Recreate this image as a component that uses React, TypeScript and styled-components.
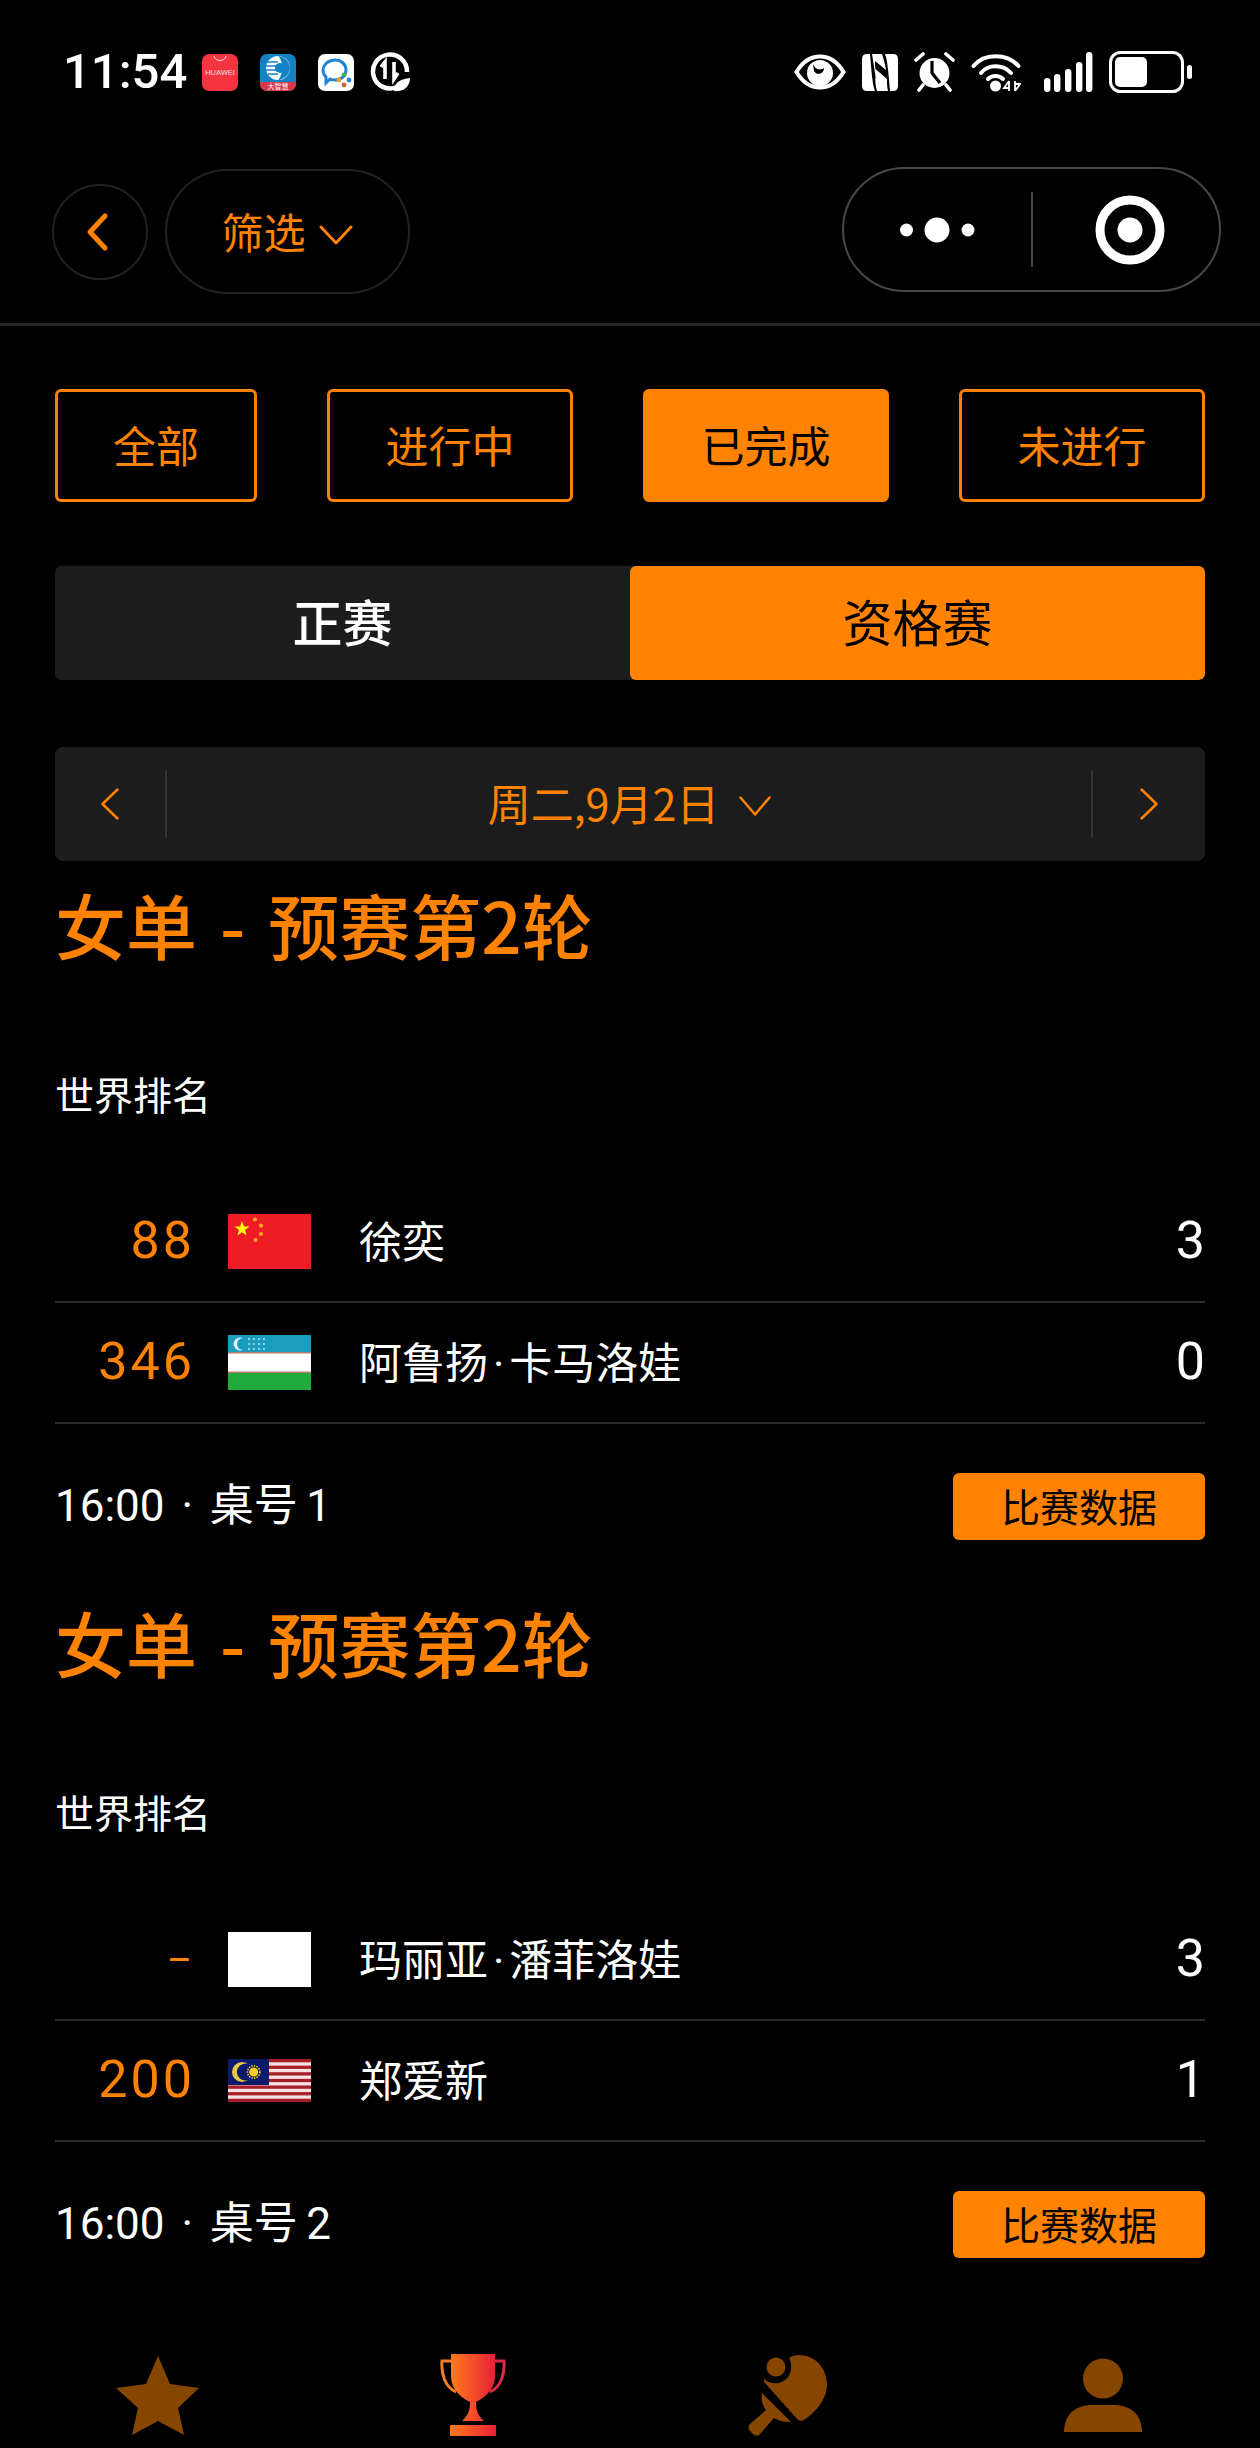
import React from "react";
import styled, { createGlobalStyle } from "styled-components";

const GlobalStyle = createGlobalStyle`
  html, body {
    margin: 0;
    padding: 0;
    background: #000;
  }
  body {
    font-family: "Noto Sans CJK SC", "Noto Sans", sans-serif;
    color: #fff;
  }
`;

const orange = "#ff8200";

const Page = styled.div`
  width: 1260px;
  height: 2448px;
  background: #000;
  overflow: hidden;
`;

/* status bar */
const StatusBar = styled.div`
  height: 52px;
  padding: 46px 68px 0 63px;
  display: flex;
  align-items: center;
  justify-content: space-between;
`;

const StatusLeft = styled.div`
  display: flex;
  align-items: center;
`;

const Clock = styled.div`
  font-family: "Roboto", sans-serif;
  font-size: 49px;
  font-weight: 500;
  width: 139px;
  line-height: 52px;
`;

const AppIcons = styled.div`
  display: flex;
  align-items: center;
  gap: 22px;
`;

const AppIcon = styled.div<{ $bg: string }>`
  width: 36px;
  height: 37px;
  border-radius: 7px;
  background: ${(p) => p.$bg};
  display: flex;
  flex-direction: column;
  align-items: center;
  justify-content: flex-start;
  overflow: hidden;
`;

const HuaweiText = styled.span`
  font-family: "Liberation Sans", sans-serif;
  font-size: 7.5px;
  line-height: 9px;
  margin-top: 3px;
  color: #ffdfe1;
`;

const BlueBand = styled.span`
  width: 100%;
  height: 9px;
  background: #d8384a;
  color: #fff;
  font-size: 7px;
  line-height: 9px;
  text-align: center;
`;

const LeafBadge = styled.div`
  margin-left: -6px;
  display: flex;
`;

const StatusRight = styled.div`
  display: flex;
  align-items: center;
  gap: 16px;
`;

const SignalWrap = styled.div`
  margin-left: 7px;
  display: flex;
`;

/* nav bar */
const NavBar = styled.div`
  height: 228px;
  box-sizing: border-box;
  border-bottom: 3px solid #262626;
  padding: 71px 39px 0 52px;
  display: flex;
  justify-content: space-between;
  align-items: flex-start;
`;

const NavLeft = styled.div`
  display: flex;
  align-items: center;
  gap: 17px;
`;

const BackCircle = styled.div`
  width: 96px;
  height: 96px;
  box-sizing: border-box;
  border: 2px solid #222;
  border-radius: 50%;
  padding-right: 6px;
  display: flex;
  align-items: center;
  justify-content: center;
`;

const FilterPill = styled.div`
  width: 245px;
  height: 125px;
  box-sizing: border-box;
  border: 2px solid #222;
  border-radius: 63px;
  padding-bottom: 3px;
  display: flex;
  align-items: center;
  justify-content: center;
  gap: 12px;
  color: ${orange};
  font-size: 42px;
`;

const DownMark = styled.span`
  display: flex;
  margin-top: 9px;
`;

const Capsule = styled.div`
  width: 379px;
  height: 125px;
  margin-top: -2px;
  box-sizing: border-box;
  border: 2px solid #484848;
  border-radius: 63px;
  display: flex;
  align-items: center;
`;

const CapsulePart = styled.div<{ $w: number; $shift?: number }>`
  width: ${(p) => p.$w}px;
  box-sizing: border-box;
  padding-left: ${(p) => p.$shift ?? 0}px;
  display: flex;
  align-items: center;
  justify-content: center;
`;

const CapsuleDivider = styled.div`
  width: 2px;
  height: 75px;
  background: #484848;
`;

/* content */
const Content = styled.div`
  padding: 0 55px;
`;

const StatusTabs = styled.div`
  margin-top: 63px;
  display: flex;
  justify-content: space-between;
`;

const StatusTab = styled.div<{ $active?: boolean; $w: number }>`
  width: ${(p) => p.$w}px;
  height: 113px;
  box-sizing: border-box;
  border: 3px solid ${orange};
  border-radius: 6px;
  padding-bottom: 4px;
  display: flex;
  align-items: center;
  justify-content: center;
  font-size: 43px;
  color: ${(p) => (p.$active ? "#000" : orange)};
  background: ${(p) => (p.$active ? orange : "transparent")};
`;

const Segment = styled.div`
  margin-top: 64px;
  height: 114px;
  display: flex;
  border-radius: 6px;
  overflow: hidden;
  background: #1c1c1c;
`;

const SegmentItem = styled.div<{ $active?: boolean }>`
  flex: 1;
  padding-bottom: 6px;
  display: flex;
  align-items: center;
  justify-content: center;
  font-size: 50px;
  font-weight: ${(p) => (p.$active ? 400 : 500)};
  color: ${(p) => (p.$active ? "#000" : "#fff")};
  background: ${(p) => (p.$active ? orange : "transparent")};
  border-radius: 6px;
`;

const DateBar = styled.div`
  margin-top: 67px;
  height: 114px;
  background: #1c1c1c;
  border-radius: 8px;
  display: flex;
  align-items: center;
`;

const DateSide = styled.div<{ $right?: boolean }>`
  width: ${(p) => (p.$right ? 114 : 112)}px;
  height: 68px;
  display: flex;
  align-items: center;
  justify-content: center;
  box-sizing: border-box;
  border-${(p) => (p.$right ? "left" : "right")}: 2px solid #333;
`;

const DateLabel = styled.div`
  flex: 1;
  padding-bottom: 5px;
  padding-left: 2px;
  display: flex;
  align-items: center;
  justify-content: center;
  gap: 19px;
  color: ${orange};
  font-size: 43px;
`;

const MatchBlock = styled.section`
  height: 718px;
`;

const Heading = styled.h2`
  margin: 0;
  padding-top: 12px;
  height: 100px;
  box-sizing: content-box;
  font-size: 71px;
  line-height: 100px;
  font-weight: 500;
  word-spacing: 7px;
  color: ${orange};
  white-space: pre;
`;

const RankLabel = styled.div`
  margin-top: 90px;
  height: 60px;
  line-height: 60px;
  font-size: 39px;
  color: #fff;
`;

const Players = styled.div`
  margin-top: 59px;
`;

const PlayerRow = styled.div`
  height: 121px;
  display: flex;
  align-items: center;
  border-bottom: 2px solid #2a2a2a;
  box-sizing: border-box;
`;

const Rank = styled.div<{ $dash?: boolean }>`
  width: 140px;
  padding-bottom: ${(p) => (p.$dash ? 0 : 3)}px;
  text-align: right;
  color: ${orange};
  font-family: "Roboto", sans-serif;
  font-size: ${(p) => (p.$dash ? 38 : 52)}px;
  letter-spacing: 3px;
`;

const FlagBox = styled.div`
  margin-left: 33px;
  width: 83px;
  height: 55px;
  flex-shrink: 0;
  display: flex;
  align-items: center;
`;

const PlayerName = styled.div`
  margin-left: 48px;
  padding-bottom: 6px;
  flex: 1;
  font-family: "Roboto", "Noto Sans CJK SC", sans-serif;
  font-size: 43px;
  color: #fff;
`;

const NameDot = styled.span`
  margin: 0 5px;
`;

const Score = styled.div`
  padding-bottom: 3px;
  font-family: "Roboto", sans-serif;
  font-size: 52px;
  color: #fff;
`;

const MatchFooter = styled.div`
  margin-top: 46px;
  display: flex;
  align-items: center;
  justify-content: space-between;
`;

const MatchInfo = styled.div`
  padding-bottom: 8px;
  font-family: "Roboto", "Noto Sans CJK SC", sans-serif;
  font-size: 44px;
  word-spacing: -2.5px;
  color: #fff;
  white-space: pre;
`;

const StatsButton = styled.div`
  width: 252px;
  height: 67px;
  border-radius: 6px;
  padding-bottom: 3px;
  box-sizing: border-box;
  background: ${orange};
  color: #000;
  font-size: 39px;
  display: flex;
  align-items: center;
  justify-content: center;
`;

const BottomNav = styled.div`
  margin-top: 56px;
  height: 84px;
  display: grid;
  grid-template-columns: repeat(4, 315px);
  justify-items: center;
  align-items: center;
`;

const Chevron = ({ dir, w, h, sw }: { dir: "l" | "r" | "d"; w: number; h: number; sw: number }) => {
  const d =
    dir === "l"
      ? `M${w - sw} ${sw} L${sw} ${h / 2} L${w - sw} ${h - sw}`
      : dir === "r"
      ? `M${sw} ${sw} L${w - sw} ${h / 2} L${sw} ${h - sw}`
      : `M${sw} ${sw} L${w / 2} ${h - sw} L${w - sw} ${sw}`;
  return (
    <svg width={w} height={h} viewBox={`0 0 ${w} ${h}`}>
      <path d={d} fill="none" stroke={orange} strokeWidth={sw} strokeLinecap="round" strokeLinejoin="round" />
    </svg>
  );
};

const ChinaFlag = () => (
  <svg width="83" height="55" viewBox="0 0 83 55">
    <rect width="83" height="55" fill="#ee1c25" />
    <polygon
      fill="#ffff00"
      points="14,7 15.9,12.5 21.6,12.5 17,16 18.7,21.5 14,18.2 9.3,21.5 11,16 6.4,12.5 12.1,12.5"
    />
    <circle cx="27" cy="5.5" r="2.1" fill="#f7a81a" />
    <circle cx="33" cy="11.7" r="2.1" fill="#f7a81a" />
    <circle cx="33" cy="20" r="2.1" fill="#f7a81a" />
    <circle cx="27.5" cy="26" r="2.1" fill="#f7a81a" />
  </svg>
);

const UzbekFlag = () => (
  <svg width="83" height="55" viewBox="0 0 83 55">
    <rect width="83" height="18" fill="#1c9cc0" />
    <rect y="18" width="83" height="19" fill="#fff" />
    <rect y="17" width="83" height="1.5" fill="#b5796f" />
    <rect y="36.5" width="83" height="1.5" fill="#b5796f" />
    <rect y="38" width="83" height="17" fill="#20ab3c" />
    <circle cx="12" cy="9" r="6.5" fill="#dff3f8" />
    <circle cx="15" cy="9" r="6" fill="#1c9cc0" />
    {[0, 1, 2].map((r) =>
      [0, 1, 2, 3].map((c) => (
        <circle key={`${r}-${c}`} cx={21 + c * 5} cy={4 + r * 5} r="0.9" fill="#cfe9f2" />
      ))
    )}
  </svg>
);

const MalaysiaFlag = () => (
  <svg width="83" height="43" viewBox="0 0 83 43">
    <rect width="83" height="43" fill="#f6e4e4" />
    {[0, 1, 2, 3, 4, 5, 6].map((i) => (
      <rect key={i} y={i * 6.62} width="83" height="3.3" fill="#a81e28" />
    ))}
    <rect width="41" height="26" fill="#0b1a6b" />
    <circle cx="14" cy="13" r="10" fill="#e9c94a" />
    <circle cx="17.5" cy="13" r="8.6" fill="#0b1a6b" />
    <circle cx="25.7" cy="13" r="4.5" fill="#f7cf26" />
    <circle cx="25.7" cy="13" r="6.2" fill="none" stroke="#f7cf26" strokeWidth="1.6" strokeDasharray="1.4 1.2" />
  </svg>
);

const BlankFlag = () => (
  <svg width="83" height="55" viewBox="0 0 83 55">
    <rect width="83" height="55" fill="#fff" />
  </svg>
);

const HuaweiBag = () => (
  <svg width="16" height="11" viewBox="0 0 16 11">
    <path d="M2 2 C3 8 13 8 14 2" fill="none" stroke="#ffdfe1" strokeWidth="1" />
  </svg>
);

const BlueGlobe = () => (
  <svg width="36" height="28" viewBox="0 0 36 28">
    <circle cx="18" cy="14" r="12" fill="#fff" />
    <path d="M18 2 C26 3 30 9 30 14 C30 20 25 25 18 26 C23 22 24 7 18 2 Z" fill="#1483c6" />
    <path d="M7 8 H18 M6 12 H18 M6 16 H18 M8 20 H18" stroke="#1483c6" strokeWidth="1.3" />
    <circle cx="20" cy="14" r="5" fill="#1483c6" />
  </svg>
);

const ChatMark = () => (
  <svg width="36" height="37" viewBox="0 0 36 37">
    <path
      d="M5 17 C5 10 11 6 17 6 C23 6 28 10 28 16 C28 22 23 26 17 26 C15 26 13 26 12 25 L8 29 L8 23 C6 21 5 19 5 17 Z"
      fill="none"
      stroke="#1f86d6"
      strokeWidth="3"
    />
    <circle cx="26" cy="21" r="2.4" fill="#3fae5a" />
    <circle cx="31" cy="26" r="2.4" fill="#1f86d6" />
    <circle cx="21" cy="26" r="2.4" fill="#f0a020" />
    <circle cx="26" cy="31" r="2.4" fill="#e0583a" />
  </svg>
);

const DataSaver = () => (
  <svg width="40" height="40" viewBox="0 0 40 40">
    <path d="M27 35 A17 17 0 1 1 37 20" fill="none" stroke="#fff" strokeWidth="4.5" />
    <path d="M11 15 L15 10 V27 M24 10 V27 L28 21" fill="none" stroke="#fff" strokeWidth="3.6" />
    <path d="M24 39 C24 30 31 27 40 26 C40 35 33 40 24 39 Z" fill="#fff" />
  </svg>
);

const Eye = () => (
  <svg width="52" height="36" viewBox="0 0 52 36">
    <path
      d="M2.5 18 C9 7 17 2.5 26 2.5 C35 2.5 43 7 49.5 18 C43 29 35 33.5 26 33.5 C17 33.5 9 29 2.5 18 Z"
      fill="none"
      stroke="#fff"
      strokeWidth="4"
    />
    <circle cx="26" cy="19" r="13" fill="#fff" />
    <path d="M19 10 C21 15 25 17 30 14 C30 20 23 22 20 17 Z" fill="#000" />
  </svg>
);

const Nfc = () => (
  <svg width="36" height="37" viewBox="0 0 36 37">
    <path d="M8 0 H5 Q0 0 0 5 V32 Q0 37 5 37 H13 C10 30 9 10 8 0 Z" fill="#fff" />
    <path d="M28 37 H31 Q36 37 36 32 V5 Q36 0 31 0 H23 C26 7 27 27 28 37 Z" fill="#fff" />
    <path d="M10 0 H20 C22 6 23 10 24 16 L13 7 C13 10 13 13 13.5 15 L25 25 C25 29 25 33 26 37 H15 C13.5 32 13 27 13.5 22 Z" fill="#fff" />
  </svg>
);

const Alarm = () => (
  <svg width="41" height="40" viewBox="0 0 41 40">
    <circle cx="20.5" cy="21" r="15" fill="#fff" />
    <path d="M18 9 V21 L26 31" fill="none" stroke="#000" strokeWidth="3.2" />
    <path
      d="M2 8 L9 2 M32 2 L39 8 M9 33 L5 38 M32 33 L36 38"
      stroke="#fff"
      strokeWidth="3.6"
      strokeLinecap="round"
    />
  </svg>
);

const Wifi = () => (
  <svg width="50" height="40" viewBox="0 0 50 40">
    <g fill="none" stroke="#fff" strokeWidth="4" strokeLinecap="round">
      <path d="M2.5 14 C13 1 36 1 47.5 14" />
      <path d="M10 21 C17 12 32 12 40 21" />
      <path d="M17 27 C21 23 28 23 32 27" />
    </g>
    <circle cx="24.5" cy="34" r="5.5" fill="#fff" />
    <path d="M38 29 V39 M38 29 L33 36 H38 M44 29 V39 M44 39 L49 32 H44" fill="none" stroke="#fff" strokeWidth="1.8" />
  </svg>
);

const Signal = () => (
  <svg width="49" height="40" viewBox="0 0 49 40">
    {[
      [0, 26],
      [10, 22],
      [21, 17],
      [32, 10],
      [42, 0],
    ].map(([x, y]) => (
      <rect key={x} x={x} y={y} width="6.4" height={40 - y} rx="3.2" fill="#fff" />
    ))}
  </svg>
);

const Battery = () => (
  <svg width="83" height="42" viewBox="0 0 83 42">
    <rect x="1.5" y="1.5" width="72" height="39" rx="10" fill="none" stroke="#fff" strokeWidth="3" />
    <rect x="6" y="6" width="32" height="30" rx="5" fill="#fff" />
    <rect x="78" y="14" width="5" height="14" rx="2.5" fill="#fff" />
  </svg>
);

const Dots = () => (
  <svg width="76" height="26" viewBox="0 0 76 26">
    <circle cx="6.5" cy="13" r="6.5" fill="#fff" />
    <circle cx="37" cy="13" r="12.5" fill="#fff" />
    <circle cx="68" cy="13" r="6.5" fill="#fff" />
  </svg>
);

const RecordTarget = () => (
  <svg width="70" height="70" viewBox="0 0 70 70">
    <circle cx="35" cy="35" r="30" fill="none" stroke="#fff" strokeWidth="9" />
    <circle cx="35" cy="35" r="12.5" fill="#fff" />
  </svg>
);

const navColor = "#864600";

const StarIcon = () => (
  <svg width="83" height="79" viewBox="0 0 83 79">
    <polygon fill={navColor} points="42,0 54,28 83,32 62,52 68,79 42,65 16,79 22,52 0,32 30,28" />
  </svg>
);

const TrophyIcon = () => (
  <svg width="66" height="82" viewBox="0 0 66 82">
    <defs>
      <linearGradient id="cup" x1="0" x2="1">
        <stop offset="0" stopColor="#ff7a1a" />
        <stop offset="1" stopColor="#e8203a" />
      </linearGradient>
    </defs>
    <path
      d="M11 0 H55 V22 C55 36 44 44 36 48 C36 56 38 62 44 67 H22 C28 62 30 56 30 48 C22 44 11 36 11 22 Z"
      fill="url(#cup)"
    />
    <path d="M11 7 H2 C1 20 5 33 16 38" fill="none" stroke="#f47c2a" strokeWidth="3" />
    <path d="M55 7 H64 C65 20 61 33 50 38" fill="none" stroke="#d92a4a" strokeWidth="3" />
    <rect x="10" y="71" width="46" height="11" rx="1" fill="url(#cup)" />
  </svg>
);

const PaddleIcon = () => (
  <svg width="80" height="81" viewBox="0 0 80 81">
    <circle cx="28" cy="12" r="9.5" fill={navColor} />
    <path
      d="M41 3 C44 1 48 0 51 0 C68 0 79 14 79 30 C79 44 67 58 56 65 C54 66 52 66 50 65 L16 27 L16 24 C24 31 34 29 40 22 C44 17 44 9 41 3 Z"
      fill={navColor}
    />
    <path
      d="M14 38 L43 67 C38 67 31 66 26 63 L12 79 C10 81 7 81 5 79 L2 76 C0 74 0 71 2 69 L18 55 C14 50 13 44 14 38 Z"
      fill={navColor}
    />
  </svg>
);

const PersonIcon = () => (
  <svg width="78" height="74" viewBox="0 0 78 74">
    <circle cx="39" cy="20.5" r="20" fill={navColor} />
    <path d="M0 74 C0 56 12 47 28 47 H50 C66 47 78 56 78 74 Z" fill={navColor} />
  </svg>
);

type Player = { rank: string; flag: React.ReactNode; name: string; score: number };
type Match = { table: string; players: Player[] };

const matches: Match[] = [
  {
    table: "16:00  ·  桌号 1",
    players: [
      { rank: "88", flag: <ChinaFlag />, name: "徐奕", score: 3 },
      { rank: "346", flag: <UzbekFlag />, name: "阿鲁扬·卡马洛娃", score: 0 },
    ],
  },
  {
    table: "16:00  ·  桌号 2",
    players: [
      { rank: "–", flag: <BlankFlag />, name: "玛丽亚·潘菲洛娃", score: 3 },
      { rank: "200", flag: <MalaysiaFlag />, name: "郑爱新", score: 1 },
    ],
  },
];

const renderName = (name: string) => {
  const [first, last] = name.split("·");
  if (!last) return name;
  return (
    <>
      {first}
      <NameDot>·</NameDot>
      {last}
    </>
  );
};

export default function App() {
  return (
    <Page>
      <GlobalStyle />
      <StatusBar>
        <StatusLeft>
          <Clock>11:54</Clock>
          <AppIcons>
            <AppIcon $bg="#f4343f">
              <HuaweiBag />
              <HuaweiText>HUAWEI</HuaweiText>
            </AppIcon>
            <AppIcon $bg="#1483c6">
              <BlueGlobe />
              <BlueBand>大智慧</BlueBand>
            </AppIcon>
            <AppIcon $bg="#fff">
              <ChatMark />
            </AppIcon>
            <LeafBadge>
              <DataSaver />
            </LeafBadge>
          </AppIcons>
        </StatusLeft>
        <StatusRight>
          <Eye />
          <Nfc />
          <Alarm />
          <Wifi />
          <SignalWrap>
            <Signal />
          </SignalWrap>
          <Battery />
        </StatusRight>
      </StatusBar>
      <NavBar>
        <NavLeft>
          <BackCircle>
            <Chevron dir="l" w={25} h={42} sw={5} />
          </BackCircle>
          <FilterPill>
            筛选
            <DownMark>
              <Chevron dir="d" w={36} h={22} sw={3} />
            </DownMark>
          </FilterPill>
        </NavLeft>
        <Capsule>
          <CapsulePart $w={187}>
            <Dots />
          </CapsulePart>
          <CapsuleDivider />
          <CapsulePart $w={186} $shift={7}>
            <RecordTarget />
          </CapsulePart>
        </Capsule>
      </NavBar>
      <Content>
        <StatusTabs>
          <StatusTab $w={202}>全部</StatusTab>
          <StatusTab $w={246}>进行中</StatusTab>
          <StatusTab $w={246} $active>
            已完成
          </StatusTab>
          <StatusTab $w={246}>未进行</StatusTab>
        </StatusTabs>
        <Segment>
          <SegmentItem>正赛</SegmentItem>
          <SegmentItem $active>资格赛</SegmentItem>
        </Segment>
        <DateBar>
          <DateSide>
            <Chevron dir="l" w={20} h={34} sw={2.5} />
          </DateSide>
          <DateLabel>
            周二,9月2日
            <DownMark>
              <Chevron dir="d" w={34} h={22} sw={2.5} />
            </DownMark>
          </DateLabel>
          <DateSide $right>
            <Chevron dir="r" w={20} h={34} sw={2.5} />
          </DateSide>
        </DateBar>
        {matches.map((m) => (
          <MatchBlock key={m.table}>
            <Heading>女单 - 预赛第2轮</Heading>
            <RankLabel>世界排名</RankLabel>
            <Players>
              {m.players.map((p) => (
                <PlayerRow key={p.name}>
                  <Rank $dash={p.rank === "–"}>{p.rank}</Rank>
                  <FlagBox>{p.flag}</FlagBox>
                  <PlayerName>{renderName(p.name)}</PlayerName>
                  <Score>{p.score}</Score>
                </PlayerRow>
              ))}
            </Players>
            <MatchFooter>
              <MatchInfo>{m.table}</MatchInfo>
              <StatsButton>比赛数据</StatsButton>
            </MatchFooter>
          </MatchBlock>
        ))}
      </Content>
      <BottomNav>
        <StarIcon />
        <TrophyIcon />
        <PaddleIcon />
        <PersonIcon />
      </BottomNav>
    </Page>
  );
}
